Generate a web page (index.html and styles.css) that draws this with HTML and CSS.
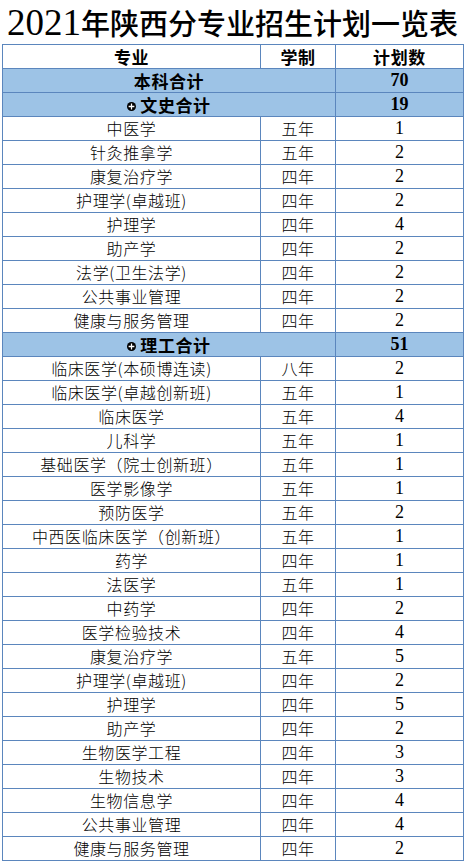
FILE: index.html
```html
<!DOCTYPE html>
<html lang="zh-CN">
<head>
<meta charset="utf-8">
<title>2021年陕西分专业招生计划一览表</title>
<link rel="stylesheet" href="styles.css">
</head>
<body>
<h1 class="title"><span class="t-num">2021</span><span class="t-cjk">年陕西分专业招生计划一览表</span></h1>
<table class="plan">
<colgroup><col class="c1"><col class="c2"><col class="c3"></colgroup>
<tbody>
<tr class="head"><td>专业</td><td>学制</td><td>计划数</td></tr>
<tr class="sum"><td colspan="2">本科合计</td><td class="num">70</td></tr>
<tr class="sum"><td colspan="2"><svg class="plus" viewBox="0 0 10 10" width="10" height="10"><circle cx="5" cy="5" r="5" fill="#000"/><path d="M5 1.8V8.2M1.8 5H8.2" stroke="#fff" stroke-width="1.4"/></svg>文史合计</td><td class="num">19</td></tr>
<tr><td>中医学</td><td>五年</td><td class="num">1</td></tr>
<tr><td>针灸推拿学</td><td>五年</td><td class="num">2</td></tr>
<tr><td>康复治疗学</td><td>四年</td><td class="num">2</td></tr>
<tr><td>护理学(卓越班)</td><td>四年</td><td class="num">2</td></tr>
<tr><td>护理学</td><td>四年</td><td class="num">4</td></tr>
<tr><td>助产学</td><td>四年</td><td class="num">2</td></tr>
<tr><td>法学(卫生法学)</td><td>四年</td><td class="num">2</td></tr>
<tr><td>公共事业管理</td><td>四年</td><td class="num">2</td></tr>
<tr><td>健康与服务管理</td><td>四年</td><td class="num">2</td></tr>
<tr class="sum"><td colspan="2"><svg class="plus" viewBox="0 0 10 10" width="10" height="10"><circle cx="5" cy="5" r="5" fill="#000"/><path d="M5 1.8V8.2M1.8 5H8.2" stroke="#fff" stroke-width="1.4"/></svg>理工合计</td><td class="num">51</td></tr>
<tr><td>临床医学(本硕博连读)</td><td>八年</td><td class="num">2</td></tr>
<tr><td>临床医学(卓越创新班)</td><td>五年</td><td class="num">1</td></tr>
<tr><td>临床医学</td><td>五年</td><td class="num">4</td></tr>
<tr><td>儿科学</td><td>五年</td><td class="num">1</td></tr>
<tr><td>基础医学（院士创新班）</td><td>五年</td><td class="num">1</td></tr>
<tr><td>医学影像学</td><td>五年</td><td class="num">1</td></tr>
<tr><td>预防医学</td><td>五年</td><td class="num">2</td></tr>
<tr><td>中西医临床医学（创新班）</td><td>五年</td><td class="num">1</td></tr>
<tr><td>药学</td><td>四年</td><td class="num">1</td></tr>
<tr><td>法医学</td><td>五年</td><td class="num">1</td></tr>
<tr><td>中药学</td><td>四年</td><td class="num">2</td></tr>
<tr><td>医学检验技术</td><td>四年</td><td class="num">4</td></tr>
<tr><td>康复治疗学</td><td>五年</td><td class="num">5</td></tr>
<tr><td>护理学(卓越班)</td><td>四年</td><td class="num">2</td></tr>
<tr><td>护理学</td><td>四年</td><td class="num">5</td></tr>
<tr><td>助产学</td><td>四年</td><td class="num">2</td></tr>
<tr><td>生物医学工程</td><td>四年</td><td class="num">3</td></tr>
<tr><td>生物技术</td><td>四年</td><td class="num">3</td></tr>
<tr><td>生物信息学</td><td>四年</td><td class="num">4</td></tr>
<tr><td>公共事业管理</td><td>四年</td><td class="num">4</td></tr>
<tr><td>健康与服务管理</td><td>四年</td><td class="num">2</td></tr>
</tbody>
</table>
</body>
</html>
```
FILE: styles.css
```css
html, body {
  margin: 0;
  padding: 0;
  background: #ffffff;
}
body {
  font-family: "Noto Sans CJK SC", sans-serif;
  color: #000;
}
.title {
  margin: 0;
  height: 44px;
  padding-left: 7px;
  font-weight: normal;
  font-size: 29px;
  line-height: 44px;
  white-space: nowrap;
}
.t-num {
  font-family: "Liberation Serif", serif;
  font-size: 37px;
  line-height: 42px;
}
.t-cjk {
  font-family: "Noto Sans CJK SC", sans-serif;
  font-weight: 500;
  font-size: 29px;
  line-height: 42px;
}
.plan {
  margin-left: 2px;
  border-collapse: collapse;
  table-layout: fixed;
  width: 461px;
}
.c1 { width: 258px; }
.c2 { width: 75px; }
.c3 { width: 128px; }
.plan td {
  border: 1px solid #5b86bd;
  height: 23px;
  padding: 0;
  text-align: center;
  vertical-align: middle;
  font-size: 16px;
  line-height: 23px;
  letter-spacing: 0.6px;
  white-space: nowrap;
  font-weight: 300;
}
.plan td.num {
  font-family: "Liberation Serif", serif;
  font-size: 18px;
  letter-spacing: 0;
  font-weight: normal;
}
.head td {
  font-weight: bold;
  font-size: 17px;
}
.sum td {
  background: #9dc3e6;
  font-weight: bold;
  font-size: 17px;
}
.sum td.num {
  font-weight: bold;
  font-size: 18px;
}
.plus {
  width: 9px;
  height: 9px;
  margin-right: 4px;
  vertical-align: 1px;
}
```
